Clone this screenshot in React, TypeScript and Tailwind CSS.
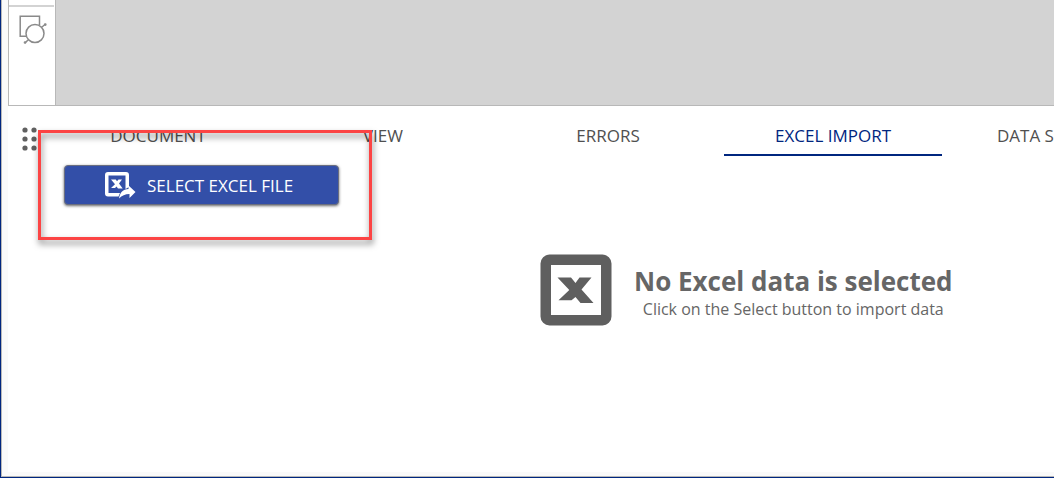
// src/App.tsx
import { useState } from "react";

const TABS = ["DOCUMENT", "VIEW", "ERRORS", "EXCEL IMPORT"];

function ShapesIcon() {
  return (
    <svg width="28" height="30" viewBox="0 0 28 30" fill="none" stroke="#8a8a8a" strokeWidth="1.5">
      <path d="M7 21.2H1.2V1.2H20.5V10" />
      <circle cx="16" cy="18.5" r="9" />
      <path d="M23 12l3.5-3M9 25l-3 3" />
      <circle cx="26.3" cy="9.6" r="0.6" />
      <circle cx="6" cy="27.5" r="0.6" />
    </svg>
  );
}

function GripIcon() {
  return (
    <svg width="16" height="24" viewBox="0 0 16 24" fill="#606060">
      {[3, 12].map((cx) =>
        [3, 12, 21].map((cy) => <circle key={`${cx}-${cy}`} cx={cx} cy={cy} r="2.6" />)
      )}
    </svg>
  );
}

function ExcelExportIcon() {
  return (
    <svg width="32" height="28" viewBox="0 0 32 28" fill="#fff">
      <path
        fillRule="evenodd"
        d="M3 0h18a3 3 0 0 1 3 3v12l-3.500 2V3.500H3.500V21H15l-1.500 3.500H3a3 3 0 0 1-3-3V3a3 3 0 0 1 3-3z"
      />
      <path d="M6 7.500h4.800l1.200 1.700 1.500-1.700H17l-3 4 3.700 5H13l-1.500-2-1.500 1.500H6l4-3.800z" />
      <path d="M14 26.500c1-6 4-9.500 9.500-9.500V13.500l7 6.500-6 6V22c-4.500 0-7.500 1.500-10.500 4.500z" />
    </svg>
  );
}

function ExcelIcon() {
  return (
    <svg width="72" height="72" viewBox="0 0 72 72" fill="#5f5f5f">
      <path
        fillRule="evenodd"
        d="M9 .5h53.500a9 9 0 0 1 9 9v53a9 9 0 0 1-9 9H9.500a9 9 0 0 1-9-9v-53a9 9 0 0 1 9-9zM11 11v50h50V11z"
      />
      <path d="M17.500 23.500H31l4.500 5.500 4-5.500H51.500L41.500 35.500 53.500 49H40.500l-5-6-4 3.200H18.500L29.300 36z" />
    </svg>
  );
}

function App() {
  const [active, setActive] = useState("EXCEL IMPORT");

  return (
    <div className="flex min-h-screen flex-col overflow-hidden border-b border-l border-[#00267f] bg-[#fafafa] font-['Open_Sans','Noto_Sans',sans-serif]">
      <div className="flex grow flex-col border-b border-l border-[#b8b8b8] pb-1 pl-[6px]">
        {/* Canvas */}
        <div className="flex h-[106px] shrink-0 border-b border-l border-[#b8b8b8] bg-[#d3d3d3]">
          <aside className="w-[47px] shrink-0 border-r border-[#b8b8b8] bg-white pt-[5px]">
            <div className="mr-px h-[2px] bg-[#d3d3d3]" />
            <button aria-label="Shapes" className="ml-[10px] mt-2 block">
              <ShapesIcon />
            </button>
          </aside>
        </div>

        <section className="flex grow flex-col bg-white">
          {/* Tabs */}
          <nav className="flex h-[50px] shrink-0 overflow-hidden text-[17px] leading-6 text-[#505050]">
            <div className="w-[41px] shrink-0 pl-[14px] pt-[21px]">
              <GripIcon />
            </div>
            <div className="flex gap-[7px]">
              {TABS.map((tab) => (
                <button
                  key={tab}
                  onClick={() => setActive(tab)}
                  className={
                    tab === active
                      ? "w-[218px] shrink-0 border-b-2 border-[#00267f] pt-3 text-[#00267f]"
                      : "w-[218px] shrink-0 border-b-2 border-transparent pt-3"
                  }
                >
                  {tab}
                </button>
              ))}
              <button
                onClick={() => setActive("DATA S")}
                className="w-[218px] shrink-0 border-b-2 border-transparent pl-12 pt-3 text-left"
              >
                DATA S
              </button>
            </div>
          </nav>

          {/* Import action */}
          <div className="relative ml-14 mt-[9px] w-[275px]">
            <button className="flex h-10 w-full items-center gap-[10px] rounded-sm border border-[#6b6f80] bg-[#334fa8] pl-10 pt-0.5 text-[17px] leading-6 text-white shadow-[0_1px_3px_rgba(0,0,0,0.6)]">
              <ExcelExportIcon />
              SELECT EXCEL FILE
            </button>
            <div className="pointer-events-none absolute -bottom-[35px] -left-[26px] -right-[33px] -top-[35px] border-3 border-[#fc4444] drop-shadow-[1px_4px_3px_rgba(0,0,0,0.5)]" />
          </div>

          {/* Empty state */}
          <div className="mt-[49px] flex items-center gap-[22px] pl-[532px] text-[#666666]">
            <ExcelIcon />
            <div className="shrink-0 pt-1.5 text-center">
              <h2 className="text-[26px] font-bold leading-8">No Excel data is selected</h2>
              <p className="text-base leading-6">Click on the Select button to import data</p>
            </div>
          </div>
        </section>
      </div>
    </div>
  );
}

export default App;
